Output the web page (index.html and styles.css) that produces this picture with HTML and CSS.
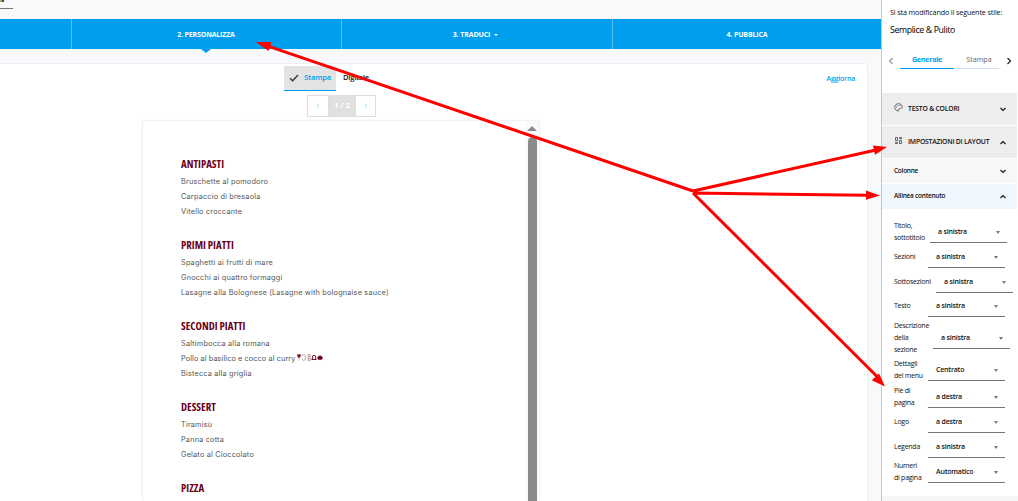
FILE: index.html
```html
<!DOCTYPE html>
<html lang="it">
<head>
<meta charset="utf-8">
<title>Personalizza menu</title>
<link rel="stylesheet" href="styles.css">
</head>
<body>
<div class="app">
  <main class="main">
    <div class="topbar"><div class="field-end"><i></i></div></div>
    <nav class="steps">
      <div class="step first"></div>
      <div class="step active"><span class="t-pers">2. PERSONALIZZA</span></div>
      <div class="step"><span class="t-trad">3. TRADUCI</span><i class="caret"></i></div>
      <div class="step last"><span class="t-pub">4. PUBBLICA</span></div>
    </nav>
    <section class="card">
      <header class="tools">
        <div class="tabs">
          <div class="tab selected"><svg width="10" height="8" viewBox="0 0 10 8"><path d="M1 4.2L3.6 6.8L9 1" fill="none" stroke="#333" stroke-width="1.3"/></svg><span>Stampa</span></div>
          <div class="tab"><span>Digitale</span></div>
        </div>
        <a class="refresh">Aggiorna</a>
      </header>
      <div class="pager">
        <div class="page-btn"><svg width="4" height="6" viewBox="0 0 4 6"><path d="M3 .5L1 3L3 5.5"/></svg></div>
        <div class="page-num">1 / 2</div>
        <div class="page-btn"><svg width="4" height="6" viewBox="0 0 4 6"><path d="M1 .5L3 3L1 5.5"/></svg></div>
      </div>
      <div class="preview">
        <div class="menu">
          <h2>ANTIPASTI</h2>
          <p>Bruschette al pomodoro</p><p>Carpaccio di bresaola</p><p>Vitello croccante</p>
          <h2>PRIMI PIATTI</h2>
          <p>Spaghetti ai frutti di mare</p><p>Gnocchi ai quattro formaggi</p><p>Lasagne alla Bolognese (Lasagne with bolognaise sauce)</p>
          <h2>SECONDI PIATTI</h2>
          <p>Saltimbocca alla romana</p>
          <p><span class="tight">Pollo al basilico e cocco al curry</span><svg class="allergens" width="26" height="7" viewBox="0 0 26 7"><path d="M0 .5H4L3 3.5H1ZM2 3V6.5" fill="#6b1426" stroke="#8a5560" stroke-width=".5"/><path d="M6 .7Q8.5 0 8.5 3.5T6 6.4M5.5 1V2.5M5.5 4.5V6" fill="none" stroke="#b88a94" stroke-width=".8"/><path d="M11 .6H13.2V6.4H11ZM11 2.5H13M11 4.5H13" fill="none" stroke="#b88a94" stroke-width=".8"/><path d="M14.5 5.5H19.5M15.4 5.5V3Q15.4 1.4 17 1.4T18.7 3V5.5" fill="none" stroke="#6b1426"/><path d="M20.5 4Q20.5 2 23 2T25.5 3.8Q25.5 5.8 23 5.8T20.5 4ZM23 2V1" fill="#6b0018" stroke="#6b0018" stroke-width=".5"/></svg></p>
          <p>Bistecca alla griglia</p>
          <h2>DESSERT</h2>
          <p>Tiramisù</p><p>Panna cotta</p><p>Gelato al Cioccolato</p>
          <h2>PIZZA</h2>
        </div>
        <div class="scrollbar"><i class="up"></i><i class="thumb"></i></div>
      </div>
    </section>
  </main>
  <aside class="side">
    <div class="intro">Si sta modificando il seguente stile:</div>
    <div class="style-name">Semplice &amp; Pulito</div>
    <div class="side-tabs">
      <svg class="prev" width="6" height="8" viewBox="0 0 6 8"><path d="M4.5 1L1.5 4L4.5 7"/></svg>
      <div class="side-tab on">Generale</div>
      <div class="side-tab">Stampa</div>
      <svg class="next" width="6" height="8" viewBox="0 0 6 8"><path d="M1.5 1L4.5 4L1.5 7"/></svg>
    </div>
    <div class="acc a1">
      <svg class="ico" width="9" height="9" viewBox="0 0 9 9"><path d="M4.4.7C2.1.7.7 2.5.7 4.3S2.3 8 4.3 8C5.2 8 4.7 7 4.8 6.3S5.6 5.4 6.5 5.4S8.2 5 8.2 3.7C8.2 1.8 6.5.7 4.4.7Z" fill="none" stroke="#555" stroke-width=".9"/><path d="M2 3.6h1v1H2zM3.4 1.9h1v1h-1zM5.5 2.1h1v1h-1z" fill="#666"/></svg>
      <span class="t-testo">TESTO &amp; COLORI</span><svg class="chev" width="8" height="5" viewBox="0 0 8 5"><path d="M1.5 1L4 3.5L6.5 1"/></svg>
    </div>
    <div class="acc a2">
      <svg class="ico" width="9" height="9" viewBox="0 0 9 9"><path d="M1.5 1.5h2v3h-2zM5.5 1.5h2v1.2h-2zM1.5 6.3h2v1.2h-2zM5.5 4.5h2v3h-2z" fill="none" stroke="#555" stroke-width=".9"/></svg>
      <span class="t-imp">IMPOSTAZIONI DI LAYOUT</span><svg class="chev" width="8" height="5" viewBox="0 0 8 5"><path d="M1.5 4L4 1.5L6.5 4"/></svg>
    </div>
    <div class="acc a3"><span>Colonne</span><svg class="chev" width="8" height="5" viewBox="0 0 8 5"><path d="M1.5 1L4 3.5L6.5 1"/></svg></div>
    <div class="acc a4"><span>Allinea contenuto</span><svg class="chev" width="8" height="5" viewBox="0 0 8 5"><path d="M1.5 4L4 1.5L6.5 4"/></svg></div>
    <div class="options">
      <div class="opt w36"><label>Titolo,<br>sottotitolo</label><div class="select">a sinistra<i></i></div></div>
      <div class="opt"><label>Sezioni</label><div class="select">a sinistra<i></i></div></div>
      <div class="opt w42"><label>Sottosezioni</label><div class="select">a sinistra<i></i></div></div>
      <div class="opt"><label>Testo</label><div class="select">a sinistra<i></i></div></div>
      <div class="opt w39"><label>Descrizione<br>della<br>sezione</label><div class="select">a sinistra<i></i></div></div>
      <div class="opt"><label>Dettagli<br>del menu</label><div class="select">Centrato<i></i></div></div>
      <div class="opt"><label>Piè di<br>pagina</label><div class="select">a destra<i></i></div></div>
      <div class="opt"><label>Logo</label><div class="select">a destra<i></i></div></div>
      <div class="opt"><label>Legenda</label><div class="select">a sinistra<i></i></div></div>
      <div class="opt"><label>Numeri<br>di pagina</label><div class="select auto">Automatico<i></i></div></div>
    </div>
    <div class="side-foot"></div>
  </aside>
  <svg class="arrows" width="1018" height="501" viewBox="0 0 1018 501">
    <g stroke="#f00" stroke-width="3" fill="none"><path d="M693 191L268 46.1M693 191L876 150M693 193L867 195.3M693 193L877 376.5"/></g>
    <g fill="#f00"><path d="M256 42L271.5 42L268.5 51Z"/><path d="M887 147L873 145.5L875 154.7Z"/><path d="M880 195.5L866 190.5L866 199.8Z"/><path d="M885 386.5L871.8 380.3L879 373.5Z"/></g>
  </svg>
</div>
</body>
</html>
```
FILE: styles.css
```css
* { box-sizing: border-box; }
body { margin: 0; font-family: "Open Sans", "Noto Sans", sans-serif; font-size: 7.5px; color: #111; overflow: hidden; }
h2, p { margin: 0; }
.app { position: relative; display: flex; width: 1018px; height: 501px; overflow: hidden; background: #f8f9fb; }
.main { width: 881px; display: flex; flex-direction: column; }
.topbar { height: 19px; }
.field-end { width: 13px; height: 9px; border-bottom: 1px solid #777; }
.field-end i { display: block; width: 4px; height: 2px; background: #c99a4a; border-right: 2px solid #3b4a78; }
.steps { display: flex; height: 30px; flex: none; background: #009fee; color: #fff; font-weight: 700; font-size: 7px; }
.step { position: relative; width: 271px; display: flex; align-items: center; justify-content: center; border-left: 1px solid #5ac0f4; }
.step.first { width: 71px; border: 0; }
.step.active { width: 270px; padding-right: 1px; }
.step.last { width: 269px; }
.step.active::after { content: ""; position: absolute; left: 129px; top: 30px; border: 5px solid transparent; border-top: 4px solid #009fee; border-bottom: 0; }
.t-pers { letter-spacing: -0.17px; }
.t-trad { letter-spacing: -0.1px; margin-left: -3px; }
.t-pub { letter-spacing: -0.15px; }
.caret { border: 2.5px solid transparent; border-top-color: #fff; border-bottom: 0; margin: 1px 0 0 4px; }
.card { margin: 14px 13px 0 -4px; flex: 1; min-height: 0; background: #fff; border: 1px solid #eceef1; border-bottom: 0; border-radius: 3px 3px 0 0; display: flex; flex-direction: column; align-items: flex-start; }
.tools { display: flex; width: 100%; height: 31px; padding: 2px 12px 0 287px; justify-content: space-between; flex: none; }
.tabs { display: flex; gap: 1px; }
.tab { height: 25px; display: flex; align-items: center; padding: 0 6px 3px; font-weight: 600; letter-spacing: -0.2px; }
.tab.selected { width: 52px; background: #e3e3e3; border-bottom: 1px solid #009fee; color: #009fee; gap: 5px; padding: 0 0 2px 5px; letter-spacing: -0.1px; }
.tab svg { margin-top: 2px; flex: none; }
.refresh { color: #009fee; font-weight: 600; font-size: 7px; line-height: 25px; letter-spacing: -0.2px; }
.pager { display: flex; margin-left: 310px; height: 22px; flex: none; }
.page-btn { width: 22px; border: 1px solid #ddd; display: flex; align-items: center; justify-content: center; }
.page-btn:last-child { width: 21px; }
.page-btn path { stroke: #a9dcf7; fill: none; }
.page-num { width: 26px; background: #e0e0e0; color: #fff; font-weight: 700; line-height: 21px; text-align: center; }
.preview { margin: 3px 0 0 145px; width: 398px; flex: 1; min-height: 0; border: 1px solid #f2f2f2; border-bottom: 0; border-radius: 2px; box-shadow: 0 0 2px #eee; display: flex; justify-content: space-between; overflow: hidden; }
.menu { padding: 33px 0 0 38px; font-family: Inter, sans-serif; font-size: 7.3px; letter-spacing: 0.2px; color: #555; }
.menu h2 { height: 20px; font: 700 11.2px/20px "Open Sans", sans-serif; font-stretch: 75%; letter-spacing: 0; color: #6b0018; transform: scaleX(0.965); transform-origin: left; white-space: nowrap; }
.menu p + h2 { margin-top: 16px; }
.menu p { height: 15px; line-height: 16px; white-space: nowrap; }
.tight { letter-spacing: 0.1px; }
.allergens { margin-left: 1px; }
.scrollbar { width: 14px; background: #fafafa; display: flex; flex-direction: column; align-items: center; padding-top: 5px; }
.up { border: 5px solid transparent; border-bottom-color: #8a8a8a; border-top: 0; }
.thumb { width: 9px; flex: 1; margin-top: 6px; border-radius: 5px 5px 0 0; background: #8a8a8a; }
.side { width: 137px; background: #fff; border-left: 1px solid #c4c6c8; display: flex; flex-direction: column; padding-top: 4px; }
.intro { height: 17px; line-height: 17px; padding-left: 8px; white-space: nowrap; font-size: 7.2px; font-weight: 500; letter-spacing: -0.13px; }
.style-name { height: 18px; line-height: 18px; padding-left: 8px; font-size: 8.8px; font-weight: 500; letter-spacing: -0.38px; color: #000; }
.side-tabs { height: 29px; margin-top: 7px; padding-left: 6px; display: flex; align-items: center; margin-bottom: 18px; font-size: 7.2px; }
.side-tabs path { fill: none; stroke: #222; stroke-width: 1.2; }
.side-tabs .prev path { stroke: #999; }
.side-tab { height: 17px; width: 45px; line-height: 15px; text-align: center; color: #666; border-bottom: 1px solid #d3e2f0; padding-left: 5px; }
.side-tab.on { width: 54px; margin-left: 6px; color: #009fee; border-color: #009fee; font-weight: 700; padding-left: 0; letter-spacing: -0.3px; }
.side-tabs .next { margin-left: 7px; }
.acc { display: flex; align-items: center; padding: 0 10px 0 12px; margin-bottom: 1px; width: 135px; flex: none; }
.acc span { margin-top: -2px; white-space: nowrap; }
.acc .chev { margin-left: auto; }
.chev path { fill: none; stroke: #111; stroke-width: 1.1; }
.ico { margin: -3px 5px 0 0; flex: none; }
.a1, .a2 { height: 32px; background: #ededed; font-weight: 600; font-size: 6.8px; letter-spacing: -0.2px; }
.a1 { border-radius: 2px 2px 0 0; }
.a3 { height: 24px; background: #f7f7f7; font-weight: 600; font-size: 6.5px; letter-spacing: -0.25px; }
.a4 { height: 25px; background: #eef8fe; font-weight: 600; font-size: 6.5px; letter-spacing: -0.25px; }
.options { margin-top: 10px; padding-left: 12px; display: grid; grid-template-rows: 24px 26px 24px 24px 40px 24px 30px 20px 30px 20px; font-size: 7px; }
.opt { display: grid; grid-template-columns: 34px 77px; align-items: center; align-content: center; }
.opt label { line-height: 12px; white-space: nowrap; letter-spacing: -0.25px; }
.w36 { grid-template-columns: 36px 77px; }
.w42 { grid-template-columns: 42px 77px; }
.w39 { grid-template-columns: 39px 77px; }
.select { height: 22px; padding: 0 7px 0 8px; display: flex; align-items: center; justify-content: space-between; border-bottom: 1px solid #777; font-weight: 600; letter-spacing: -0.2px; }
.select i { border: 2.5px solid transparent; border-top: 3px solid #777; border-bottom: 0; margin-top: 1px; }
.auto { letter-spacing: -0.2px; }
.side-foot { flex: 1; margin-top: 14px; background: #f5f5f5; }
.arrows { position: absolute; left: 0; top: 0; }
```
